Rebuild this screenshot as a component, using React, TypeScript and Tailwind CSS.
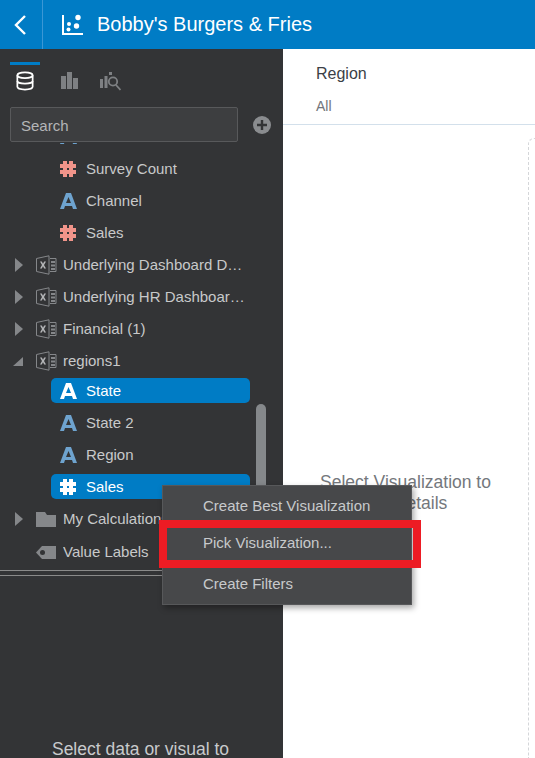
const FONT = "font-['Liberation_Sans',Arial,sans-serif]";

function BackIcon() {
  return (
    <svg width="14" height="22" viewBox="0 0 14 22" fill="none" stroke="#ffffff" strokeWidth="2.4">
      <path d="M12 2 3 11l9 9" />
    </svg>
  );
}

function ScatterIcon() {
  return (
    <svg width="22" height="22" viewBox="0 0 22 22" fill="#ffffff">
      <path d="M1 1h2v18h19v2H1z" />
      <circle cx="8" cy="10" r="2" />
      <circle cx="17" cy="3.500" r="2.700" />
      <circle cx="15.500" cy="12" r="2.700" />
      <circle cx="7.500" cy="15.500" r="2" />
    </svg>
  );
}

function DatabaseIcon() {
  return (
    <svg width="18" height="22" viewBox="0 0 20 22" fill="none" stroke="#ffffff" strokeWidth="1.900">
      <ellipse cx="10" cy="4.500" rx="8.500" ry="3.200" />
      <path d="M1.500 4.500v13c0 1.700 3.800 3 8.500 3s8.500-1.300 8.500-3v-13" />
      <path d="M1.500 11c0 1.700 3.800 3 8.500 3s8.500-1.300 8.500-3" />
    </svg>
  );
}

function BarsIcon() {
  return (
    <svg width="17" height="17" viewBox="0 0 17 17" fill="#7e8083">
      <rect x="0" y="4" width="5" height="13" />
      <rect x="6" y="0" width="5" height="17" />
      <rect x="12" y="6" width="5" height="11" />
    </svg>
  );
}

function ExploreIcon() {
  return (
    <svg width="21" height="19" viewBox="0 0 21 19" fill="#7e8083">
      <rect x="0" y="7" width="3" height="9" />
      <rect x="4.500" y="4" width="3" height="12" />
      <rect x="9" y="0" width="3" height="3" />
      <circle cx="13" cy="9.500" r="4.200" fill="none" stroke="#7e8083" strokeWidth="1.800" />
      <path d="M16 13l4.500 5" stroke="#7e8083" strokeWidth="1.800" />
    </svg>
  );
}

function PlusCircleIcon() {
  return (
    <svg width="18" height="18" viewBox="0 0 18 18">
      <circle cx="9" cy="9" r="9" fill="#8a8c8f" />
      <path d="M9 4v10M4 9h10" stroke="#333436" strokeWidth="2.400" />
    </svg>
  );
}

function HashIcon({ color }: { color: string }) {
  return (
    <svg width="16" height="16" viewBox="0 0 16 16" fill={color}>
      <path
        d="M3 0h4v3h2V0h4v3h3v4h-3v2h3v4h-3v3H9v-3H7v3H3v-3H0V9h3V7H0V3h3zm4 7v2h2V7z"
        fillRule="evenodd"
      />
    </svg>
  );
}

function AttrIcon({ color }: { color: string }) {
  return (
    <svg width="17" height="16" viewBox="0 0 17 16" fill={color}>
      <path d="M6 0h5l6 16h-4l-1-3H5l-1 3H0zm2.500 4L6 10h5z" fillRule="evenodd" />
    </svg>
  );
}

function ExcelIcon() {
  return (
    <svg width="21" height="20" viewBox="0 0 21 20" fill="none">
      <path d="M.5 3.500 13 .8v18.400L.5 16.500z" stroke="#85878a" />
      <path d="M4 6.500h1.800L7 8.700l1.200-2.200H10L8 10l2 3.500H8.200L7 11.300l-1.200 2.200H4L6 10z" fill="#b4b5b7" />
      <path d="M14 3.500h6v13h-6" stroke="#85878a" />
      <path d="M15 6h4v2h-4zM15 9.500h4v2h-4zM15 13h4v2h-4z" fill="#85878a" />
    </svg>
  );
}

function FolderIcon() {
  return (
    <svg width="20" height="15" viewBox="0 0 20 15" fill="#85878a">
      <path d="M0 0h9l2 3h9v12H0z" />
    </svg>
  );
}

function TagIcon() {
  return (
    <svg width="20" height="16" viewBox="0 0 20 16">
      <path d="M6 2h14v13H6L0 8.500z" fill="#85878a" />
      <circle cx="6.500" cy="8.500" r="2.500" fill="#333436" />
    </svg>
  );
}

function Arrow({ open }: { open?: boolean }) {
  return open ? (
    <svg width="12" height="14" viewBox="0 0 12 14" fill="#85878a">
      <path d="M1 12 11 3v9z" />
    </svg>
  ) : (
    <svg width="10" height="14" viewBox="0 0 10 14" fill="#85878a">
      <path d="M1 0l8 7-8 7z" />
    </svg>
  );
}

type FieldRowProps = {
  label: string;
  kind: "hash" | "attr";
  selected?: boolean;
};

function FieldRow({ label, kind, selected }: FieldRowProps) {
  const color = selected ? "#ffffff" : kind === "hash" ? "#f1948a" : "#6ea3cf";

  return (
    <div className="flex h-8 items-center">
      <div
        className={`ml-[51px] flex h-[25px] w-[199px] items-center rounded-[5px] pl-[9px] ${
          selected ? "mb-px bg-[#007cc5] pt-px text-white" : "text-[#c8c9ca]"
        }`}
      >
        <span className="flex w-[26px]">
          {kind === "hash" ? <HashIcon color={color} /> : <AttrIcon color={color} />}
        </span>
        <span>{label}</span>
      </div>
    </div>
  );
}

type FolderRowProps = {
  label: string;
  open?: boolean;
  arrow?: boolean;
  icon?: "excel" | "folder" | "tag";
  className?: string;
};

function FolderRow({ label, open, arrow = true, icon = "excel", className = "" }: FolderRowProps) {
  return (
    <div className={`flex h-8 items-center text-[#c8c9ca] ${className}`}>
      <span className="flex w-[36px] justify-end pr-[12px]">{arrow ? <Arrow open={open} /> : null}</span>
      <span className="flex w-[27px] items-center">
        {icon === "excel" ? <ExcelIcon /> : icon === "folder" ? <FolderIcon /> : <TagIcon />}
      </span>
      <span className="w-[183px] truncate">{label}</span>
    </div>
  );
}

function ContextMenu() {
  return (
    <div className="absolute top-[485px] left-[162px] h-[120px] w-[250px] border border-[#57585a] bg-[#47484a] text-[#c8cacc] shadow-[2px_3px_6px_rgba(0,0,0,0.35)]">
      <div className="flex h-[40px] items-center pl-[40px]">Create Best Visualization</div>
      <div className="flex h-[34px] items-center pl-[40px]">Pick Visualization...</div>
      <div className="flex h-[44px] items-center pt-[4px] pl-[40px]">Create Filters</div>
      <div className="absolute top-[34px] left-[-4px] h-[48px] w-[262px] border-8 border-[#ed1c24]" />
    </div>
  );
}

export default function App() {
  return (
    <div className={`relative flex h-[758px] w-[535px] flex-col overflow-hidden bg-white text-[15px] ${FONT}`}>
      <header className="flex h-[49px] shrink-0 items-center bg-[#007cc5] text-white">
        <div className="flex h-full w-[43px] items-center justify-center border-r border-[#3b97d5] pr-[2px]">
          <BackIcon />
        </div>
        <span className="ml-[18px] flex">
          <ScatterIcon />
        </span>
        <span className="mb-[2px] ml-[14px] text-[20px]">Bobby's Burgers &amp; Fries</span>
      </header>

      <div className="flex min-h-0 flex-1">
        <aside className="flex w-[283px] shrink-0 flex-col overflow-hidden bg-[#333436]">
          <div className="flex h-[58px] shrink-0 items-start pt-[13px] pl-[10px]">
            <div className="flex h-[32px] w-[30px] justify-center border-t-[3px] border-[#007cc5] pt-[5px]">
              <DatabaseIcon />
            </div>
            <span className="mt-[10px] ml-[21px] flex">
              <BarsIcon />
            </span>
            <span className="mt-[10px] ml-[22px] flex">
              <ExploreIcon />
            </span>
          </div>
          <div className="flex h-[36px] shrink-0 items-start pl-[10px]">
            <div className="flex h-[35px] w-[228px] items-center rounded-[2px] border border-[#58595b] bg-[#3d3e40] pt-[4px] pl-[10px] text-[#b4b5b7]">
              Search
            </div>
            <span className="mt-[9px] ml-[15px] flex">
              <PlusCircleIcon />
            </span>
          </div>

          <div className="relative h-[427px] shrink-0 overflow-hidden">
            <div className="mt-[-22px] flex h-8 items-center pb-[2px] pl-[60px]">
              <AttrIcon color="#6ea3cf" />
            </div>
            <FieldRow label="Survey Count" kind="hash" />
            <FieldRow label="Channel" kind="attr" />
            <FieldRow label="Sales" kind="hash" />
            <FolderRow label="Underlying Dashboard Data" />
            <FolderRow label="Underlying HR Dashboard Data" />
            <FolderRow label="Financial (1)" />
            <FolderRow label="regions1" open className="mb-[-2px]" />
            <FieldRow label="State" kind="attr" selected />
            <FieldRow label="State 2" kind="attr" />
            <FieldRow label="Region" kind="attr" />
            <FieldRow label="Sales" kind="hash" selected />
            <FolderRow label="My Calculations" icon="folder" />
            <FolderRow label="Value Labels" icon="tag" arrow={false} className="pt-[2px]" />
            <div className="absolute top-[261px] left-[256px] h-[120px] w-[10px] rounded-full bg-[#85888b]" />
          </div>

          <div className="h-[6px] shrink-0 border-y border-[#8a8a8a]" />

          <p className="mt-[162px] pr-[42px] pl-[40px] text-center text-[17.500px] leading-[22px] text-[#c8cacc]">
            Select data or visual to see details
          </p>
        </aside>

        <main className="flex min-w-0 flex-1 flex-col">
          <div className="h-[76px] shrink-0 border-b border-[#d3e0eb] pt-[13px] pl-[33px]">
            <div className="text-[16px] leading-[24px] text-[#3b3f46]">Region</div>
            <div className="mt-[12px] text-[14px] leading-[16px] text-[#71757b]">All</div>
          </div>
          <div className="flex min-h-0 flex-1 pt-[13px]">
            <div className="w-[245px] shrink-0 pt-[334px] text-center text-[17.500px] leading-[21px] text-[#74777c]">
              Select Visualization to
              <br />
              see details
            </div>
            <div className="flex-1 rounded-tl-[6px] border-t border-l border-dashed border-[#d4d6d9]" />
          </div>
        </main>
      </div>

      <ContextMenu />
    </div>
  );
}
